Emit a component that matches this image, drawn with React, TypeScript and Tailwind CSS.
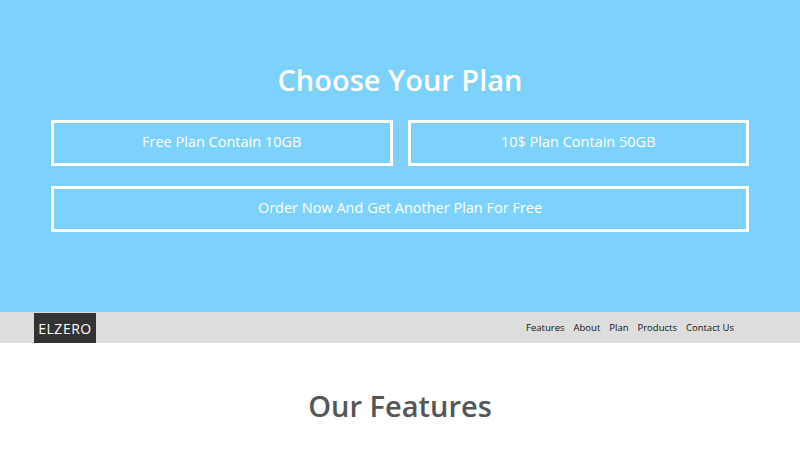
import React from 'react';

const plans = ['Free Plan Contain 10GB', '10$ Plan Contain 50GB'];
const links = ['Features', 'About', 'Plan', 'Products', 'Contact Us'];

export default function App() {
  return (
    <div className="min-h-[450px] bg-white" style={{ fontFamily: '"Open Sans", sans-serif' }}>
      {/* plans */}
      <section className="h-[312px] bg-[#7dd1fd] pt-[58px]">
        <h1 className="text-center text-[29px] leading-[44px] font-semibold text-white">Choose Your Plan</h1>
        <div className="mx-auto mt-[18px] w-[698px]">
          <div className="grid grid-cols-2 gap-[15px]">
            {plans.map((p) => (
              <div key={p} className="flex h-[46px] items-center justify-center border-[3px] border-white pb-[2px] text-[14.5px] text-white">
                {p}
              </div>
            ))}
          </div>
          <div className="mt-[20px] flex h-[46px] items-center justify-center border-[3px] border-white pb-[2px] text-[14.5px] text-white">
            Order Now And Get Another Plan For Free
          </div>
        </div>
      </section>

      {/* nav */}
      <nav className="flex h-[31px] items-center justify-between bg-[#dddddd] pl-[34px] pr-[66px]">
        <div className="flex h-[30px] w-[62px] items-center justify-center self-end bg-[#333333] text-[14px] tracking-[0.5px] text-white">
          ELZERO
        </div>
        <ul className="flex gap-[9px] pt-[2px] text-[9.5px] text-[#111]">
          {links.map((l) => (
            <li key={l}>{l}</li>
          ))}
        </ul>
      </nav>

      {/* features */}
      <section className="pt-[41px]">
        <h2 className="text-center text-[29px] leading-[44px] font-semibold text-[#555555]">Our Features</h2>
      </section>
    </div>
  );
}
